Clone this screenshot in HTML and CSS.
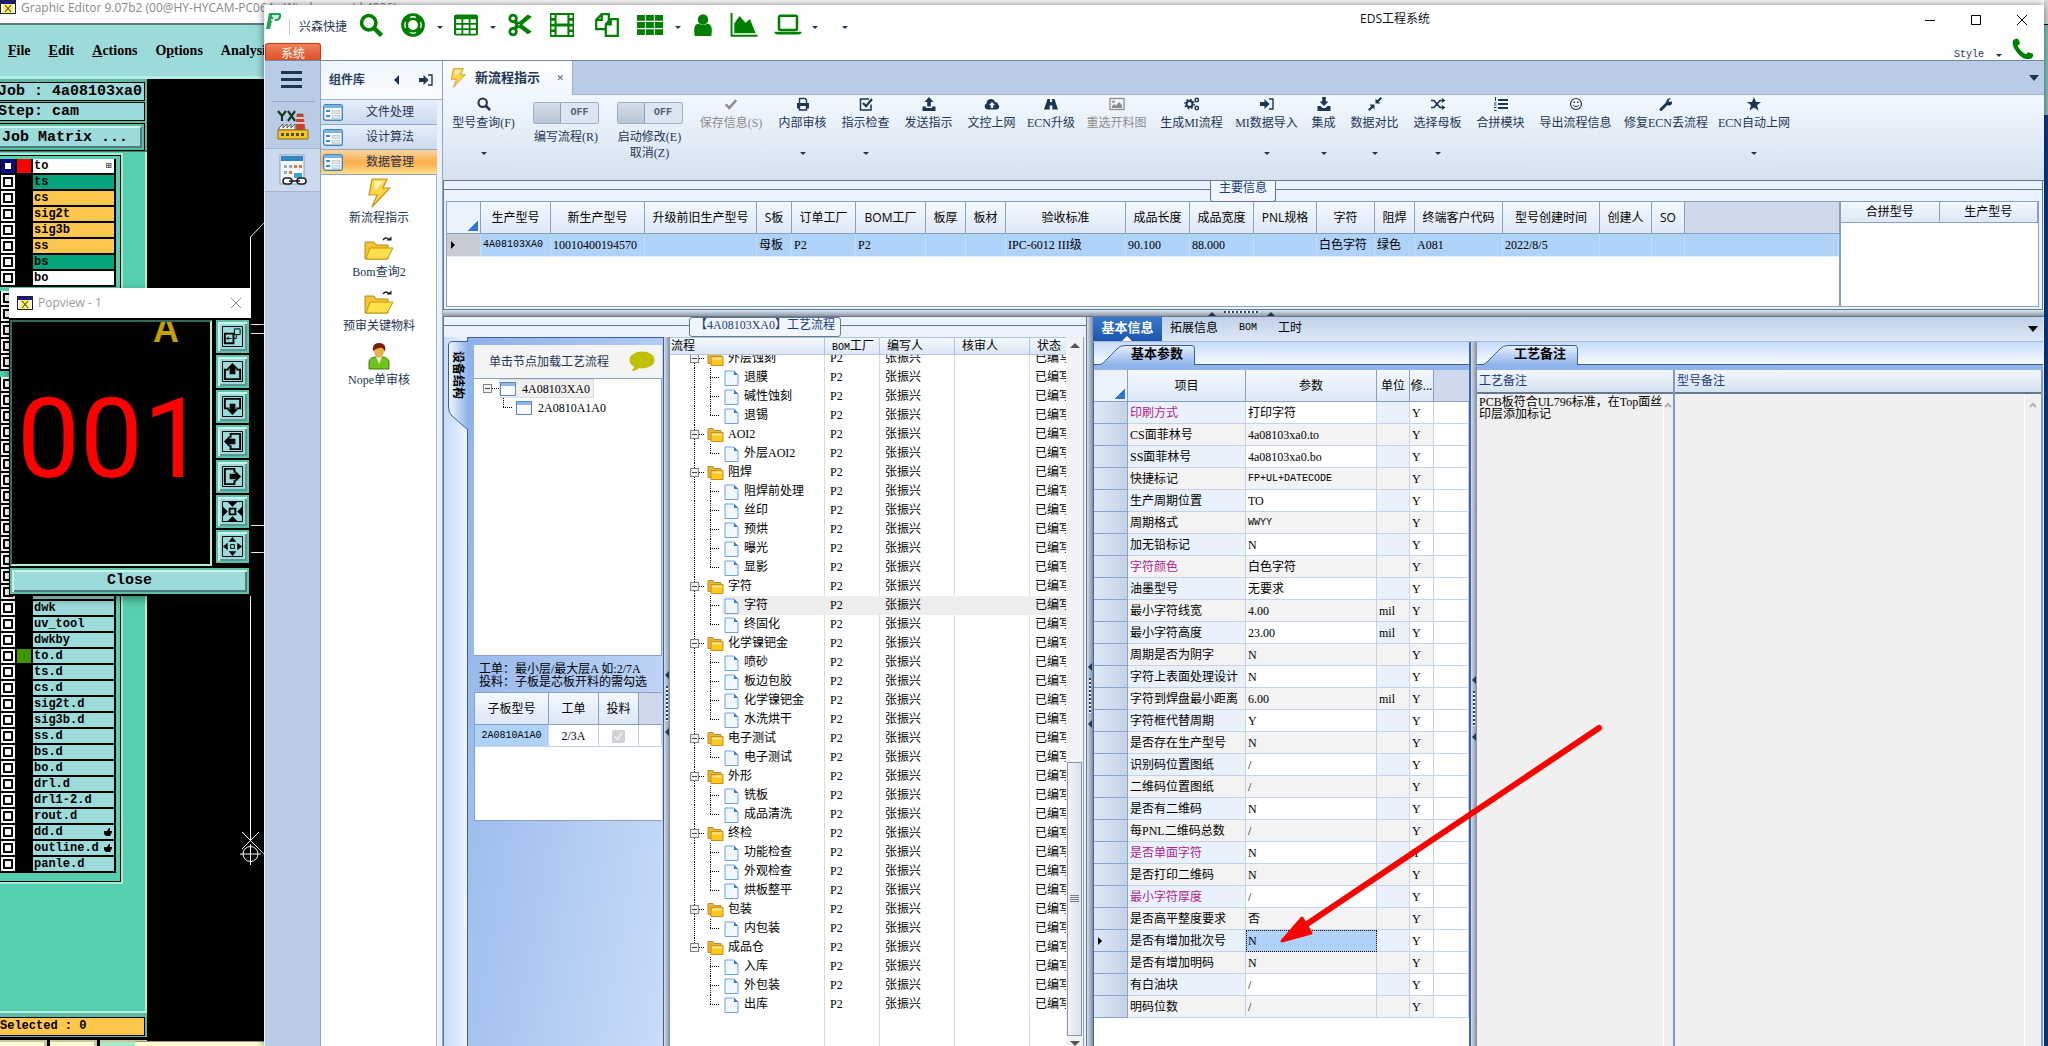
FILE: index.html
```html
<!DOCTYPE html>
<html lang="zh-CN">
<head>
<meta charset="utf-8">
<title>EDS工程系统</title>
<link rel="stylesheet" href="styles.css">
</head>
<body>
<svg class="defs" aria-hidden="true">
  <symbol id="search" viewBox="0 0 16 16"><circle cx="6.5" cy="6.5" r="4.8" fill="none" stroke="currentColor" stroke-width="2.4"/><path d="M10 10l5 5" stroke="currentColor" stroke-width="3"/></symbol>
  <symbol id="ring" viewBox="0 0 16 16"><circle cx="8" cy="8" r="5.6" fill="none" stroke="currentColor" stroke-width="4.6"/><path d="M3 6q-1 2 0 4M13 6q1 2 0 4M6 3q2-1 4 0M6 13q2 1 4 0" stroke="#fff" fill="none" stroke-width=".9"/></symbol>
  <symbol id="table" viewBox="0 0 16 16"><rect x="0" y="1" width="16" height="14" rx="1.4" fill="currentColor"/><path d="M1.4 4.2h3.6v2.4H1.4zM6.2 4.2h3.6v2.4H6.2zM11 4.2h3.6v2.4H11zM1.4 7.8h3.6v2.4H1.4zM6.2 7.8h3.6v2.4H6.2zM11 7.8h3.6v2.4H11zM1.4 11.4h3.6v2.4H1.4zM6.2 11.4h3.6v2.4H6.2zM11 11.4h3.6v2.4H11z" fill="#fff"/></symbol>
  <symbol id="cut" viewBox="0 0 16 16"><circle cx="3.4" cy="3.6" r="2.2" fill="none" stroke="currentColor" stroke-width="1.8"/><circle cx="3.4" cy="12.4" r="2.2" fill="none" stroke="currentColor" stroke-width="1.8"/><path d="M5 5l10 7.4-1.8 1.2L4.6 7zM5 11l10-8.4-1.8-1L4.6 9z" fill="currentColor" stroke="currentColor"/></symbol>
  <symbol id="film" viewBox="0 0 16 16"><path d="M0 0h16v16H0z" fill="currentColor"/><path d="M4.4 1.4h7.2v5.6H4.4zM4.4 9h7.2v5.6H4.4zM1 1.4h2v2H1zM1 5.2h2v2H1zM1 9h2v2H1zM1 12.6h2v2H1zM13 1.4h2v2h-2zM13 5.2h2v2h-2zM13 9h2v2h-2zM13 12.6h2v2h-2z" fill="#fff"/></symbol>
  <symbol id="copy" viewBox="0 0 16 16"><g fill="#fff" stroke="currentColor" stroke-width="1.5"><path d="M4.500.8h4.700v10H.8V4.500zM.8 4.500H4.500V.8"/><path d="M10.500 4h4.700v11.200H7.200V7.500zM7.200 7.500h3.300V4"/></g></symbol>
  <symbol id="cells" viewBox="0 0 18 16"><path d="M0 1h5.500v4H0zM6.200 1h5.500v4H6.200zM12.400 1H18v4h-5.600zM0 6h5.500v4H0zM6.200 6h5.500v4H6.200zM12.400 6H18v4h-5.600zM0 11h5.500v4H0zM6.200 11h5.500v4H6.200zM12.400 11H18v4h-5.600z" fill="currentColor"/></symbol>
  <symbol id="user" viewBox="0 0 16 16"><circle cx="8" cy="4" r="3.8" fill="currentColor"/><path d="M2 16q-1.600-9 3-9 3 2 6 0 4.600 0 3 9z" fill="currentColor"/></symbol>
  <symbol id="chart" viewBox="0 0 18 16"><path d="M.7 0v15.200H18" fill="none" stroke="currentColor" stroke-width="1.300"/><path d="M2.500 13.500V7L6 2l4 4.500 3-2.500 3.800 9.500z" fill="currentColor"/></symbol>
  <symbol id="laptop" viewBox="0 0 18 16"><rect x="3" y="1.800" width="12" height="9.500" rx="1" fill="none" stroke="currentColor" stroke-width="1.700"/><path d="M0 12.500h18q0 1.800-2 1.800H2q-2 0-2-1.800z" fill="currentColor"/></symbol>
  <symbol id="phone" viewBox="0 0 16 16"><path d="M1 1.500Q4-.8 5 1.500l.8 2.500-1.700 1.800Q6 9.500 10 11.800l1.800-1.500 3.400 1.200Q16 15 12 15.500 8 15.500 4 11-1 5 1 1.500z" fill="currentColor"/></symbol>
  <symbol id="tick" viewBox="0 0 16 16"><path d="M2 8.500l4 4 8-9" fill="none" stroke="currentColor" stroke-width="2.800"/></symbol>
  <symbol id="print" viewBox="0 0 16 16"><path d="M4.500 8V2.500H10L11.500 4v4" fill="none" stroke="currentColor" stroke-width="1.400"/><path d="M2 7h12v5.500h-2V10H4v2.500H2z" fill="currentColor"/><path d="M4.500 10v4h7v-4" fill="none" stroke="currentColor" stroke-width="1.400"/></symbol>
  <symbol id="check" viewBox="0 0 16 16"><path d="M13 8.500V14H2.500V3H11" fill="none" stroke="currentColor" stroke-width="1.500"/><path d="M5 7l3 3.200L14 3" fill="none" stroke="currentColor" stroke-width="2.200"/></symbol>
  <symbol id="up" viewBox="0 0 16 16"><path d="M8 1l4.500 5H9.800v4.500H6.200V6H3.500zM1.500 10.500h3.500v1.500h6v-1.500h3.500V15h-13z" fill="currentColor"/></symbol>
  <symbol id="down" viewBox="0 0 16 16"><path d="M8 10L3.500 5.500h2.700V1h3.600v4.500h2.700zM1.500 10h3l2 2h3l2-2h3v5h-13z" fill="currentColor"/></symbol>
  <symbol id="cloud" viewBox="0 0 16 16"><path fill-rule="evenodd" d="M4 13.500Q0 13 .8 9.500 1 8 2.600 7.200 3 3 7 3q3 0 4 3 3 0 3 2.500 1.500.7 1.200 2.700-.6 2.300-3.200 2.300zM8 6L4.800 9.300h2v2.700h2.400V9.300h2z" fill="currentColor"/></symbol>
  <symbol id="road" viewBox="0 0 16 16"><path d="M4.500 3H7v3h2V3h2.500L15 13.500H9.300V9.500H6.700v4H1z" fill="currentColor"/></symbol>
  <symbol id="image" viewBox="0 0 16 16"><rect x="1" y="2.500" width="14" height="11" fill="none" stroke="currentColor" stroke-width="1.300"/><circle cx="4.500" cy="5.800" r="1.300" fill="currentColor"/><path d="M3 12V10l2-2 2 1.500L10 6l3 3v3z" fill="currentColor"/></symbol>
  <symbol id="cogs" viewBox="0 0 16 16"><circle cx="5.500" cy="8" r="3" fill="none" stroke="currentColor" stroke-width="2"/><circle cx="5.500" cy="8" r="4.600" fill="none" stroke="currentColor" stroke-width="1.500" stroke-dasharray="1.800 1.800"/><circle cx="12.800" cy="4" r="1.700" fill="none" stroke="currentColor" stroke-width="1.500"/><circle cx="12.800" cy="12" r="1.700" fill="none" stroke="currentColor" stroke-width="1.500"/></symbol>
  <symbol id="enter" viewBox="0 0 16 16"><path d="M1 6h4.500V3l5 5-5 5v-3H1z" fill="currentColor"/><path d="M10 3h4v10h-4" fill="none" stroke="currentColor" stroke-width="1.400"/></symbol>
  <symbol id="compress" viewBox="0 0 16 16"><path d="M8.500 2.500v5h5l-1.700-1.700L15 2.500 13.500 1l-3.300 3.200zM7.500 13.500v-5h-5l1.700 1.700L1 13.500 2.500 15l3.300-3.200z" fill="currentColor"/></symbol>
  <symbol id="shuffle" viewBox="0 0 16 16"><path d="M1 4.500h3l6 7h3M1 11.500h3l6-7h3" fill="none" stroke="currentColor" stroke-width="1.700"/><path d="M12 2l3.500 2.500L12 7zM12 9l3.500 2.500L12 14z" fill="currentColor"/></symbol>
  <symbol id="list" viewBox="0 0 16 16"><path d="M5 3h10v2H5zM5 7h10v2H5zM5 11h10v2H5zM2 1h1v4H2zM1 6.500h2.500v1H1zM1 8.500h2.500v1H1zM1 11h2.500v1H1zM1 14h2.500v1H1z" fill="currentColor"/></symbol>
  <symbol id="smile" viewBox="0 0 16 16"><circle cx="8" cy="8" r="5.500" fill="none" stroke="currentColor" stroke-width="1.200"/><path d="M5.500 5.500h1.500v1.500H5.500zM9 5.500h1.500v1.500H9z" fill="currentColor"/><path d="M5 9q3 3.500 6 0" fill="none" stroke="currentColor"/></symbol>
  <symbol id="wrench" viewBox="0 0 16 16"><path d="M3 13.500L9.500 7" stroke="currentColor" stroke-width="3" stroke-linecap="round"/><path d="M13 2L10.500 4.500l1 1.500L14 5.500q.5 4-3 4-3 0-3-3.500Q9 2 13 2z" fill="currentColor"/></symbol>
  <symbol id="star" viewBox="0 0 16 16"><path d="M8 1l2 5h5l-4 3.300 1.500 5.200L8 11.500l-4.500 3L5 9.300 1 6h5z" fill="currentColor"/></symbol>
  <symbol id="bolt" viewBox="0 0 24 30"><path d="M5 1h15l-4 9h7L5 29l5-12H2z" fill="#ffd34a" stroke="#c8921a" stroke-width="1.200"/><path d="M7 3h10L8 13z" fill="#fff3a8"/></symbol>
  <symbol id="folder-out" viewBox="0 0 30 24"><path d="M1 6h9l2 3h12v14H1z" fill="#f3c338" stroke="#b98a10"/><path d="M6 12h23l-6 11H2z" fill="#ffe04a" stroke="#c4950f"/><path d="M19 4q3-4 6 0" fill="none" stroke="#222" stroke-width="1.300"/><path d="M22.500 4.500h5V.500z" fill="#222"/></symbol>
  <symbol id="person" viewBox="0 0 24 28"><path d="M2 27V20q1-5 7-5h6q6 0 7 5v7z" fill="#72c31f" stroke="#3f7d10"/><path d="M9 15h6l-3 7z" fill="#f7e9c8"/><ellipse cx="12" cy="9" rx="5" ry="6.500" fill="#e8b04a"/><path d="M6 9Q5 1 12 1q8 0 6 9-2-5-5-4-4 0-7 3z" fill="#7a1c08"/></symbol>
  <symbol id="form" viewBox="0 0 20 17"><rect x=".7" y=".7" width="18.600" height="15.600" rx="2" fill="#fff" stroke="#4784b8" stroke-width="1.400"/><path d="M1 1h18v3H1z" fill="#79b4de"/><path d="M3 7h4M3 12h4" stroke="#3a8ad0" stroke-width="2"/><path d="M9 6.500h8v3H9zM9 11.500h8v3H9z" fill="#dde6ee" stroke="#a8b8c8" stroke-width=".6"/></symbol>
  <symbol id="dir" viewBox="0 0 17 15"><path d="M1 1h5l1 2h7v9H1z" fill="#eab530" stroke="#b98a3a"/><path d="M4 5h12v9H4z" fill="#ffc81e" stroke="#c98f10"/><path d="M5 6h10v2H5z" fill="#ffe98a"/></symbol>
  <symbol id="doc" viewBox="0 0 15 16"><path d="M1 1h9l4 4v10.500H1z" fill="#f0f7ff" stroke="#6f9fe0"/><path d="M10 1v4h4z" fill="#3a78d8"/></symbol>
  <symbol id="win" viewBox="0 0 16 14"><rect x=".5" y=".5" width="15" height="13" fill="#fafdff" stroke="#5a86c0"/><path d="M1 1h14v3H1z" fill="#8fb8e8"/></symbol>
  <symbol id="xwin" viewBox="0 0 16 14"><rect x=".5" y=".5" width="15" height="13" fill="#fff" stroke="#222"/><path d="M1 1h14v3H1z" fill="#1a1a8a"/><path d="M3 4h10v9H3z" fill="#ffef6a"/><path d="M5 5l6 7M11 5l-6 7" stroke="#333"/></symbol>
  <symbol id="pop-link" viewBox="0 0 22 22"><path d="M.5.500h21v21H.5z" fill="none" stroke="#000"/><path d="M3 8h9v10H3z" fill="none" stroke="#000" stroke-width="2"/><path d="M13 3h6v6h-6zM5 13h5M15 9v4h-3M7 11l-2 2 2 2" fill="none" stroke="#000"/></symbol>
  <symbol id="pop-up" viewBox="0 0 22 22"><path d="M.5.500h21v21H.5z" fill="none" stroke="#000"/><path d="M7 9H3v10h16V9h-4" fill="none" stroke="#000" stroke-width="2"/><path d="M11 2l6 6h-3v6H8V8H5z"/></symbol>
  <symbol id="pop-in" viewBox="0 0 22 22"><path d="M.5.500h21v21H.5z" fill="none" stroke="#000"/><path d="M8 8h6v6H8z" fill="none" stroke="#000" stroke-width="2"/><path d="M6 1h10l-5 5zM6 21h10l-5-5zM1 6v10l5-5zM21 6v10l-5-5z"/></symbol>
  <symbol id="pop-out" viewBox="0 0 22 22"><path d="M.5.500h21v21H.5z" fill="none" stroke="#000"/><path d="M9 9h4v4H9z" fill="none" stroke="#000"/><path d="M7 6h8l-4-5zM7 16h8l-4 5zM6 7v8l-5-4zM16 7v8l5-4z"/></symbol>
  <symbol id="hand" viewBox="0 0 8 8"><path d="M0 3h3l2-3h1v3h2v1L6 8H2L0 6z"/></symbol>
</svg>

<section class="editor">
  <header class="editor-title"><svg width="16" height="14"><use href="#xwin"/></svg>Graphic Editor 9.07b2 (00@HY-HYCAM-PC064 - Windows - pid 4836)</header>
  <nav class="editor-menu"><a href="#"><u>F</u>ile</a><a href="#"><u>E</u>dit</a><a href="#"><u>A</u>ctions</a><a href="#">O<u>p</u>tions</a><a href="#">Analysis</a></nav>
  <div class="editor-body">
    <aside class="job">
      <div class="job-head">
        <p>Job : 4a08103xa0</p>
        <p>Step: cam</p>
        <div class="job-frame"><button>Job Matrix ...</button></div>
      </div>
      <div class="layers">
        <ul>
          <li><input type="checkbox" class="on" aria-label="to"><i class="red"></i><span class="white">to<b>⊞</b></span></li>
          <li><input type="checkbox" aria-label="ts"><i></i><span class="green">ts</span></li>
          <li><input type="checkbox" aria-label="cs"><i></i><span class="amber">cs</span></li>
          <li><input type="checkbox" aria-label="sig2t"><i></i><span class="amber">sig2t</span></li>
          <li><input type="checkbox" aria-label="sig3b"><i></i><span class="amber">sig3b</span></li>
          <li><input type="checkbox" aria-label="ss"><i></i><span class="amber">ss</span></li>
          <li><input type="checkbox" aria-label="bs"><i></i><span class="green">bs</span></li>
          <li><input type="checkbox" aria-label="bo"><i></i><span class="white">bo</span></li>
        </ul>
        <ul>
          <li><input type="checkbox" aria-label="layer"><i></i><span></span></li>
          <li><input type="checkbox" aria-label="layer"><i></i><span></span></li>
          <li><input type="checkbox" aria-label="layer"><i></i><span></span></li>
          <li><input type="checkbox" aria-label="layer"><i></i><span></span></li>
          <li><input type="checkbox" aria-label="layer"><i></i><span></span></li>
        </ul>
        <ul>
          <li><input type="checkbox" aria-label="layer"><i></i><span></span></li>
          <li><input type="checkbox" aria-label="layer"><i></i><span></span></li>
          <li><input type="checkbox" aria-label="layer"><i></i><span></span></li>
          <li><input type="checkbox" aria-label="layer"><i></i><span></span></li>
          <li><input type="checkbox" aria-label="layer"><i></i><span></span></li>
          <li><input type="checkbox" aria-label="layer"><i></i><span></span></li>
          <li><input type="checkbox" aria-label="layer"><i></i><span></span></li>
          <li><input type="checkbox" aria-label="layer"><i></i><span></span></li>
          <li><input type="checkbox" aria-label="layer"><i></i><span></span></li>
          <li><input type="checkbox" aria-label="layer"><i></i><span></span></li>
          <li><input type="checkbox" aria-label="layer"><i></i><span></span></li>
          <li><input type="checkbox" aria-label="layer"><i></i><span></span></li>
          <li><input type="checkbox" aria-label="layer"><i></i><span></span></li>
          <li><input type="checkbox" aria-label="dwk-cs"><i></i><span>dwk-cs</span></li>
          <li><input type="checkbox" aria-label="dwk"><i></i><span>dwk</span></li>
          <li><input type="checkbox" aria-label="uv_tool"><i></i><span>uv_tool</span></li>
          <li><input type="checkbox" aria-label="dwkby"><i></i><span>dwkby</span></li>
          <li><input type="checkbox" aria-label="to.d"><i class="lime"></i><span>to.d</span></li>
          <li><input type="checkbox" aria-label="ts.d"><i></i><span>ts.d</span></li>
          <li><input type="checkbox" aria-label="cs.d"><i></i><span>cs.d</span></li>
          <li><input type="checkbox" aria-label="sig2t.d"><i></i><span>sig2t.d</span></li>
          <li><input type="checkbox" aria-label="sig3b.d"><i></i><span>sig3b.d</span></li>
          <li><input type="checkbox" aria-label="ss.d"><i></i><span>ss.d</span></li>
          <li><input type="checkbox" aria-label="bs.d"><i></i><span>bs.d</span></li>
          <li><input type="checkbox" aria-label="bo.d"><i></i><span>bo.d</span></li>
          <li><input type="checkbox" aria-label="drl.d"><i></i><span>drl.d</span></li>
          <li><input type="checkbox" aria-label="drl1-2.d"><i></i><span>drl1-2.d</span></li>
          <li><input type="checkbox" aria-label="rout.d"><i></i><span>rout.d</span></li>
          <li><input type="checkbox" aria-label="dd.d"><i></i><span>dd.d<svg width="8" height="8"><use href="#hand"/></svg></span></li>
          <li><input type="checkbox" aria-label="outline.d"><i></i><span>outline.d<svg width="8" height="8"><use href="#hand"/></svg></span></li>
          <li><input type="checkbox" aria-label="panle.d"><i></i><span>panle.d</span></li>
        </ul>
      </div>
      <div class="selected"><p>Selected : 0</p></div>
      <div class="tools"><i></i><i></i><i class="cur"></i></div>
    </aside>
    <div class="board">
      <svg width="117" height="967" viewBox="147 79 117 967" fill="none" stroke="#fff">
        <path d="M264 223l-13.500 14V840M242 832l22 22M259 832l-17 17M240 854h21M250.500 844v21M251 324.500h13M251 333.500h13M251 525.500h13M251 552.500h13"/><circle cx="250.500" cy="854" r="7.500"/>
      </svg>
      <div class="board-foot"></div>
    </div>
  </div>
</section>
<div class="edge"></div>

<section class="popview">
  <header><svg width="16" height="14"><use href="#xwin"/></svg><h2>Popview - 1</h2><button aria-label="关闭"><svg width="12" height="12" stroke="#888"><path d="M1 1l10 10M11 1L1 11"/></svg></button></header>
  <div class="pop-main">
    <div class="pop-canvas"><span class="pop-a">A</span><div class="pop-digits"><span>0</span><span>0</span><span>1</span></div></div>
    <div class="pop-tools">
      <button aria-label="link"><svg><use href="#pop-link"/></svg></button>
      <button aria-label="up"><svg><use href="#pop-up"/></svg></button>
      <button aria-label="down"><svg class="r180"><use href="#pop-up"/></svg></button>
      <button aria-label="left"><svg class="r270"><use href="#pop-up"/></svg></button>
      <button aria-label="right"><svg class="r90"><use href="#pop-up"/></svg></button>
      <button aria-label="in"><svg><use href="#pop-in"/></svg></button>
      <button aria-label="out"><svg><use href="#pop-out"/></svg></button>
    </div>
  </div>
  <div class="pop-foot"><button>Close</button></div>
</section>

<main class="eds">
  <header class="eds-head">
    <div class="quick">
      <svg class="logo" width="16" height="18" viewBox="0 0 16 18"><path d="M3 1h10q3 0 2 4t-5 4H6L4 17H0z" fill="#1fa35a"/><path d="M6 4h6l-1 2H8L7 9M5 8h4" stroke="#fff" stroke-width="1.500" fill="none"/></svg>
      <span class="brand">兴森快捷</span>
      <button class="q1" aria-label="搜索"><svg><use href="#search"/></svg></button>
      <button class="q2" aria-label="帮助"><svg><use href="#ring"/></svg></button><i class="caret"></i>
      <button class="q3" aria-label="表格"><svg><use href="#table"/></svg></button><i class="caret"></i>
      <button class="q4" aria-label="剪切"><svg><use href="#cut"/></svg></button>
      <button class="q5" aria-label="胶片"><svg><use href="#film"/></svg></button>
      <button class="q6" aria-label="复制"><svg><use href="#copy"/></svg></button>
      <button class="q7" aria-label="宫格"><svg><use href="#cells"/></svg></button><i class="caret"></i>
      <button class="q8" aria-label="用户"><svg><use href="#user"/></svg></button>
      <button class="q9" aria-label="图表"><svg><use href="#chart"/></svg></button>
      <button class="q10" aria-label="电脑"><svg><use href="#laptop"/></svg></button><i class="caret"></i>
      <i class="caret more"></i>
    </div>
    <h1>EDS工程系统</h1>
    <div class="controls">
      <button aria-label="最小化"><svg width="12" height="12"><path d="M1 6.500h10"/></svg></button>
      <button aria-label="最大化"><svg width="12" height="12"><path d="M1.500 1.500h9v9h-9z"/></svg></button>
      <button aria-label="关闭"><svg width="12" height="12"><path d="M1 1l10 10M11 1L1 11"/></svg></button>
    </div>
    <a class="sys" href="#">系统</a>
    <div class="style-menu"><button>Style <i class="caret"></i></button><svg width="22" height="22"><use href="#phone"/></svg></div>
  </header>

  <div class="eds-body">
    <nav class="rail">
      <button class="burger" aria-label="菜单"><i></i><i></i><i></i></button>
      <button class="rail-item" aria-label="YX"><svg width="32" height="30" viewBox="0 0 32 30"><path d="M2 18l4-4v4l4-4v4l4-4v4l4-4v6H2z" fill="#f4f0e4" stroke="#444" stroke-width=".8"/><path d="M20 4h6l2 16h-9z" fill="#d83a2a" stroke="#555" stroke-width=".6"/><path d="M19 8h8M19 13h9" stroke="#eee" stroke-width="1.500"/><path d="M1 20h30v9H1z" fill="#f3c72a" stroke="#8a6a10"/><path d="M4 23h3v3H4zM9 23h3v3H9zM14 23h3v3h-3zM19 23h3v3h-3zM24 23h3v3h-3z" fill="#5a4a10"/><path d="M1 1l4 5v5M9 1L5 6M11 1l7 10M18 1l-7 10" fill="none" stroke="#1c3a24" stroke-width="2.200"/></svg></button>
      <button class="rail-item cur" aria-label="日程"><svg width="30" height="32" viewBox="0 0 30 32"><rect x="2" y="1" width="24" height="29" fill="#f6f9fc" stroke="#8aa0b8"/><path d="M3 2h22v5H3z" fill="#2f86c4"/><path d="M6 11h3v3H6zM11 11h3v3h-3zM6 17h3v3H6z" fill="#9ab"/><path d="M16 11h3v3h-3zM11 17h3v3h-3zM21 11h3v3h-3z" fill="#f2703a"/><path d="M16 19h8v5h-8z" fill="#3aa6d8"/><g fill="#fff" stroke="#222" stroke-width="1.600"><rect x="5" y="24" width="9" height="6" rx="3"/><rect x="19" y="24" width="9" height="6" rx="3"/><path d="M11 27h11"/></g></svg></button>
    </nav>
    <aside class="library">
      <header><h2>组件库</h2><i class="tri-left"></i><svg width="16" height="16"><use href="#enter"/></svg></header>
      <button class="group"><svg width="20" height="17"><use href="#form"/></svg><span>文件处理</span></button>
      <button class="group"><svg width="20" height="17"><use href="#form"/></svg><span>设计算法</span></button>
      <button class="group cur"><svg width="20" height="17"><use href="#form"/></svg><span>数据管理</span></button>
      <a class="tile" href="#"><svg width="24" height="30"><use href="#bolt"/></svg>新流程指示</a>
      <a class="tile" href="#"><svg class="folder" width="30" height="24"><use href="#folder-out"/></svg>Bom查询2</a>
      <a class="tile" href="#"><svg class="folder" width="30" height="24"><use href="#folder-out"/></svg>预审关键物料</a>
      <a class="tile" href="#"><svg width="24" height="28"><use href="#person"/></svg>Nope单审核</a>
    </aside>

    <div class="work">
      <div class="tabs"><div class="tab"><svg width="16" height="20"><use href="#bolt"/></svg><b>新流程指示</b><button aria-label="关闭标签">✕</button></div><i class="caret big"></i></div>
      <div class="toolbar">
        <button class="tool small"><svg><use href="#search"/></svg>型号查询(F)<i class="caret"></i></button>
        <label class="tool sw"><input type="checkbox" role="switch"><span class="switch"><b>OFF</b></span>编写流程(R)</label>
        <div class="tool sw"><label><input type="checkbox" role="switch"><span class="switch"><b>OFF</b></span>启动修改(E)</label><button>取消(Z)</button></div>
        <button class="tool small" disabled><svg><use href="#tick"/></svg>保存信息(S)</button>
        <button class="tool"><svg><use href="#print"/></svg>内部审核<i class="caret"></i></button>
        <button class="tool"><svg><use href="#check"/></svg>指示检查<i class="caret"></i></button>
        <button class="tool"><svg><use href="#up"/></svg>发送指示</button>
        <button class="tool"><svg><use href="#cloud"/></svg>文控上网</button>
        <button class="tool"><svg><use href="#road"/></svg>ECN升级</button>
        <button class="tool" disabled><svg><use href="#image"/></svg>重选开料图</button>
        <button class="tool"><svg><use href="#cogs"/></svg>生成MI流程</button>
        <button class="tool"><svg><use href="#enter"/></svg>MI数据导入<i class="caret"></i></button>
        <button class="tool"><svg><use href="#down"/></svg>集成<i class="caret"></i></button>
        <button class="tool"><svg><use href="#compress"/></svg>数据对比<i class="caret"></i></button>
        <button class="tool"><svg><use href="#shuffle"/></svg>选择母板<i class="caret"></i></button>
        <button class="tool"><svg><use href="#list"/></svg>合拼模块</button>
        <button class="tool"><svg><use href="#smile"/></svg>导出流程信息</button>
        <button class="tool"><svg><use href="#wrench"/></svg>修复ECN丢流程</button>
        <button class="tool"><svg><use href="#star"/></svg>ECN自动上网<i class="caret"></i></button>
      </div>

      <section class="main-info">
        <div class="legend"><h3>主要信息</h3></div>
        <div class="info-grids">
          <div class="info-left">
            <table class="grid info">
              <colgroup><col class="w34"><col class="w70"><col class="w94"><col class="w112"><col class="w35"><col class="w64"><col class="w70"><col class="w40"><col class="w40"><col class="w120"><col class="w64"><col class="w64"><col class="w63"><col class="w58"><col class="w40"><col class="w88"><col class="w97"><col class="w52"><col class="w33"><col></colgroup>
              <thead><tr><th class="corner"></th><th>生产型号</th><th>新生产型号</th><th>升级前旧生产型号</th><th>S板</th><th>订单工厂</th><th>BOM工厂</th><th>板厚</th><th>板材</th><th>验收标准</th><th>成品长度</th><th>成品宽度</th><th>PNL规格</th><th>字符</th><th>阻焊</th><th>终端客户代码</th><th>型号创建时间</th><th>创建人</th><th>SO</th><th class="fill"></th></tr></thead>
              <tbody><tr><td class="mark"><i></i></td><td class="m">4A08103XA0</td><td>10010400194570</td><td></td><td>母板</td><td>P2</td><td>P2</td><td></td><td></td><td>IPC-6012 III级</td><td>90.100</td><td>88.000</td><td></td><td>白色字符</td><td>绿色</td><td>A081</td><td>2022/8/5</td><td></td><td></td><td></td></tr></tbody>
            </table>
          </div>
          <div class="info-right">
            <table class="grid"><thead><tr><th>合拼型号</th><th>生产型号</th></tr></thead></table>
          </div>
        </div>
      </section>
      <div class="hsplit"><i class="tri-up"></i><i class="dots"></i><i class="tri-up"></i></div>

      <div class="lower">
        <section class="process">
          <div class="legend"><h3>【4A08103XA0】工艺流程</h3></div>
          <div class="process-body">
            <div class="side"><button><svg width="20" height="90" viewBox="0 0 20 90"><defs><linearGradient id="sg"><stop offset="0" stop-color="#f4f8ff"/><stop offset="1" stop-color="#8fb3ea"/></linearGradient></defs><path d="M20 .5H4Q.5.500.500 4V66Q.5 72 4 75L20 89" fill="url(#sg)" stroke="#3c5f9a"/></svg><b>设备结构</b></button></div>
            <div class="device">
              <div class="device-head"><span>单击节点加载工艺流程</span><svg width="26" height="22" viewBox="0 0 26 22"><ellipse cx="13" cy="9" rx="12.500" ry="8.500" fill="#bfc000"/><path d="M5 14q0 4-3 6 6 0 9-4z" fill="#bfc000"/></svg></div>
              <ul class="device-tree">
                <li><i class="box"></i><i class="dash"></i><span class="node cur"><svg width="16" height="14"><use href="#win"/></svg>4A08103XA0</span></li>
                <li class="child"><span class="node"><svg width="16" height="14"><use href="#win"/></svg>2A0810A1A0</span></li>
              </ul>
              <p class="hint">工单：最小层/最大层A 如:2/7A<br>投料：子板是芯板开料的需勾选</p>
              <div class="sub">
                <table class="grid"><colgroup><col class="w74"><col class="w50"><col class="w40"><col></colgroup>
                  <thead><tr><th>子板型号</th><th>工单</th><th>投料</th><th class="fill"></th></tr></thead>
                  <tbody><tr><td class="m hot">2A0810A1A0</td><td>2/3A</td><td><input type="checkbox" checked disabled aria-label="投料"></td><td></td></tr></tbody>
                </table>
              </div>
            </div>
            <div class="vsplit"><i class="tri-l"></i><i class="vdots"></i><i class="tri-l"></i></div>
            <div class="flow">
              <div class="flow-main">
                <table class="flow-head"><colgroup><col><col class="w55"><col class="w75"><col class="w75"><col class="w37"></colgroup><thead><tr><th>流程</th><th><span class="m">BOM</span>工厂</th><th>编写人</th><th>核审人</th><th>状态</th></tr></thead></table>
                <div class="flow-rows">
                <table><colgroup><col><col class="w55"><col class="w75"><col class="w75"><col class="w37"></colgroup>
                <tbody>
                <tr class="dir"><td><svg><use href="#dir"/></svg>外层蚀刻</td><td>P2</td><td>张振兴</td><td></td><td>已编写</td></tr>
                <tr class="doc"><td><svg><use href="#doc"/></svg>退膜</td><td>P2</td><td>张振兴</td><td></td><td>已编写</td></tr>
                <tr class="doc"><td><svg><use href="#doc"/></svg>碱性蚀刻</td><td>P2</td><td>张振兴</td><td></td><td>已编写</td></tr>
                <tr class="doc end"><td><svg><use href="#doc"/></svg>退锡</td><td>P2</td><td>张振兴</td><td></td><td>已编写</td></tr>
                <tr class="dir"><td><svg><use href="#dir"/></svg>AOI2</td><td>P2</td><td>张振兴</td><td></td><td>已编写</td></tr>
                <tr class="doc end"><td><svg><use href="#doc"/></svg>外层AOI2</td><td>P2</td><td>张振兴</td><td></td><td>已编写</td></tr>
                <tr class="dir"><td><svg><use href="#dir"/></svg>阻焊</td><td>P2</td><td>张振兴</td><td></td><td>已编写</td></tr>
                <tr class="doc"><td><svg><use href="#doc"/></svg>阻焊前处理</td><td>P2</td><td>张振兴</td><td></td><td>已编写</td></tr>
                <tr class="doc"><td><svg><use href="#doc"/></svg>丝印</td><td>P2</td><td>张振兴</td><td></td><td>已编写</td></tr>
                <tr class="doc"><td><svg><use href="#doc"/></svg>预烘</td><td>P2</td><td>张振兴</td><td></td><td>已编写</td></tr>
                <tr class="doc"><td><svg><use href="#doc"/></svg>曝光</td><td>P2</td><td>张振兴</td><td></td><td>已编写</td></tr>
                <tr class="doc end"><td><svg><use href="#doc"/></svg>显影</td><td>P2</td><td>张振兴</td><td></td><td>已编写</td></tr>
                <tr class="dir"><td><svg><use href="#dir"/></svg>字符</td><td>P2</td><td>张振兴</td><td></td><td>已编写</td></tr>
                <tr class="doc cur"><td><svg><use href="#doc"/></svg>字符</td><td>P2</td><td>张振兴</td><td></td><td>已编写</td></tr>
                <tr class="doc end"><td><svg><use href="#doc"/></svg>终固化</td><td>P2</td><td>张振兴</td><td></td><td>已编写</td></tr>
                <tr class="dir"><td><svg><use href="#dir"/></svg>化学镍钯金</td><td>P2</td><td>张振兴</td><td></td><td>已编写</td></tr>
                <tr class="doc"><td><svg><use href="#doc"/></svg>喷砂</td><td>P2</td><td>张振兴</td><td></td><td>已编写</td></tr>
                <tr class="doc"><td><svg><use href="#doc"/></svg>板边包胶</td><td>P2</td><td>张振兴</td><td></td><td>已编写</td></tr>
                <tr class="doc"><td><svg><use href="#doc"/></svg>化学镍钯金</td><td>P2</td><td>张振兴</td><td></td><td>已编写</td></tr>
                <tr class="doc end"><td><svg><use href="#doc"/></svg>水洗烘干</td><td>P2</td><td>张振兴</td><td></td><td>已编写</td></tr>
                <tr class="dir"><td><svg><use href="#dir"/></svg>电子测试</td><td>P2</td><td>张振兴</td><td></td><td>已编写</td></tr>
                <tr class="doc end"><td><svg><use href="#doc"/></svg>电子测试</td><td>P2</td><td>张振兴</td><td></td><td>已编写</td></tr>
                <tr class="dir"><td><svg><use href="#dir"/></svg>外形</td><td>P2</td><td>张振兴</td><td></td><td>已编写</td></tr>
                <tr class="doc"><td><svg><use href="#doc"/></svg>铣板</td><td>P2</td><td>张振兴</td><td></td><td>已编写</td></tr>
                <tr class="doc end"><td><svg><use href="#doc"/></svg>成品清洗</td><td>P2</td><td>张振兴</td><td></td><td>已编写</td></tr>
                <tr class="dir"><td><svg><use href="#dir"/></svg>终检</td><td>P2</td><td>张振兴</td><td></td><td>已编写</td></tr>
                <tr class="doc"><td><svg><use href="#doc"/></svg>功能检查</td><td>P2</td><td>张振兴</td><td></td><td>已编写</td></tr>
                <tr class="doc"><td><svg><use href="#doc"/></svg>外观检查</td><td>P2</td><td>张振兴</td><td></td><td>已编写</td></tr>
                <tr class="doc end"><td><svg><use href="#doc"/></svg>烘板整平</td><td>P2</td><td>张振兴</td><td></td><td>已编写</td></tr>
                <tr class="dir"><td><svg><use href="#dir"/></svg>包装</td><td>P2</td><td>张振兴</td><td></td><td>已编写</td></tr>
                <tr class="doc end"><td><svg><use href="#doc"/></svg>内包装</td><td>P2</td><td>张振兴</td><td></td><td>已编写</td></tr>
                <tr class="dir final"><td><svg><use href="#dir"/></svg>成品仓</td><td>P2</td><td>张振兴</td><td></td><td>已编写</td></tr>
                <tr class="doc tail"><td><svg><use href="#doc"/></svg>入库</td><td>P2</td><td>张振兴</td><td></td><td>已编写</td></tr>
                <tr class="doc tail"><td><svg><use href="#doc"/></svg>外包装</td><td>P2</td><td>张振兴</td><td></td><td>已编写</td></tr>
                <tr class="doc tail end"><td><svg><use href="#doc"/></svg>出库</td><td>P2</td><td>张振兴</td><td></td><td>已编写</td></tr>
                <tr class="rest"><td></td><td></td><td></td><td></td><td></td></tr>
                </tbody></table>
                </div>
              </div>
              <div class="scroll"><i class="arrow-up"></i><i class="thumb"><b></b></i><i class="arrow-down"></i></div>
            </div>
          </div>
        </section>
        <div class="vsplit wide"><i class="tri-l"></i><i class="vdots"></i><i class="tri-l"></i></div>

        <section class="detail">
          <nav class="detail-tabs"><a class="cur" href="#">基本信息</a><a href="#">拓展信息</a><a href="#" class="m">BOM</a><a href="#">工时</a><i class="caret big black"></i></nav>
          <div class="detail-body">
            <div class="params">
              <div class="subtabs"><div class="slant"><svg width="96" height="20" viewBox="0 0 96 20" fill="none"><defs><linearGradient id="tg" x2="0" y2="1"><stop offset="0" stop-color="#e8f1ff"/><stop offset="1" stop-color="#8fb3ea"/></linearGradient></defs><path d="M0 20Q4 19 7 15L18 4Q21 .5 26 .500H93Q95.500.500 95.500 4V20" fill="url(#tg)" stroke="#3c5f9a"/></svg><b>基本参数</b></div></div>
              <div class="params-grid">
              <table class="grid">
                <colgroup><col class="w34"><col class="w118"><col class="w131"><col class="w33"><col class="w24"><col></colgroup>
                <thead><tr><th class="corner"></th><th>项目</th><th>参数</th><th>单位</th><th>修...</th><th class="fill"></th></tr></thead>
                <tbody>
                <tr><td></td><td class="key">印刷方式</td><td>打印字符</td><td></td><td>Y</td><td></td></tr>
                <tr><td></td><td>CS面菲林号</td><td>4a08103xa0.to</td><td></td><td>Y</td><td></td></tr>
                <tr><td></td><td>SS面菲林号</td><td>4a08103xa0.bo</td><td></td><td>Y</td><td></td></tr>
                <tr><td></td><td>快捷标记</td><td class="m">FP+UL+DATECODE</td><td></td><td>Y</td><td></td></tr>
                <tr><td></td><td>生产周期位置</td><td>TO</td><td></td><td>Y</td><td></td></tr>
                <tr><td></td><td>周期格式</td><td class="m">WWYY</td><td></td><td>Y</td><td></td></tr>
                <tr><td></td><td>加无铅标记</td><td>N</td><td></td><td>Y</td><td></td></tr>
                <tr><td></td><td class="key">字符颜色</td><td>白色字符</td><td></td><td>Y</td><td></td></tr>
                <tr><td></td><td>油墨型号</td><td>无要求</td><td></td><td>Y</td><td></td></tr>
                <tr><td></td><td>最小字符线宽</td><td>4.00</td><td>mil</td><td>Y</td><td></td></tr>
                <tr><td></td><td>最小字符高度</td><td>23.00</td><td>mil</td><td>Y</td><td></td></tr>
                <tr><td></td><td>周期是否为阴字</td><td>N</td><td></td><td>Y</td><td></td></tr>
                <tr><td></td><td>字符上表面处理设计</td><td>N</td><td></td><td>Y</td><td></td></tr>
                <tr><td></td><td>字符到焊盘最小距离</td><td>6.00</td><td>mil</td><td>Y</td><td></td></tr>
                <tr><td></td><td>字符框代替周期</td><td>Y</td><td></td><td>Y</td><td></td></tr>
                <tr><td></td><td>是否存在生产型号</td><td>N</td><td></td><td>Y</td><td></td></tr>
                <tr><td></td><td>识别码位置图纸</td><td>/</td><td></td><td>Y</td><td></td></tr>
                <tr><td></td><td>二维码位置图纸</td><td>/</td><td></td><td>Y</td><td></td></tr>
                <tr><td></td><td>是否有二维码</td><td>N</td><td></td><td>Y</td><td></td></tr>
                <tr><td></td><td>每PNL二维码总数</td><td>/</td><td></td><td>Y</td><td></td></tr>
                <tr><td></td><td class="key">是否单面字符</td><td>N</td><td></td><td>Y</td><td></td></tr>
                <tr><td></td><td>是否打印二维码</td><td>N</td><td></td><td>Y</td><td></td></tr>
                <tr><td></td><td class="key">最小字符厚度</td><td>/</td><td></td><td>Y</td><td></td></tr>
                <tr><td></td><td>是否高平整度要求</td><td>否</td><td></td><td>Y</td><td></td></tr>
                <tr><td class="mark"><i></i></td><td>是否有增加批次号</td><td class="picked">N</td><td></td><td>Y</td><td></td></tr>
                <tr><td></td><td>是否有增加明码</td><td>N</td><td></td><td>Y</td><td></td></tr>
                <tr><td></td><td>有白油块</td><td>/</td><td></td><td>Y</td><td></td></tr>
                <tr><td></td><td>明码位数</td><td>/</td><td></td><td>Y</td><td></td></tr>
                </tbody>
              </table>
              </div>
            </div>
            <div class="vsplit"><i class="tri-l"></i><i class="vdots"></i><i class="tri-l"></i></div>
            <div class="notes">
              <div class="subtabs"><div class="slant"><svg width="96" height="20" viewBox="0 0 96 20" fill="none"><path d="M0 20Q4 19 7 15L18 4Q21 .5 26 .500H93Q95.500.500 95.500 4V20" fill="url(#tg)" stroke="#3c5f9a"/></svg><b>工艺备注</b></div></div>
              <div class="notes-body">
                <div class="note n1"><label for="n1">工艺备注</label><div class="note-row"><textarea id="n1" readonly>PCB板符合UL796标准，在Top面丝印层添加标记</textarea><i class="bar"><svg width="8" height="6"><path d="M1 5l3-3 3 3" fill="none" stroke="#b0b0b0" stroke-width="2"/></svg></i></div></div>
                <div class="note n2"><label for="n2">型号备注</label><div class="note-row"><textarea id="n2" readonly></textarea><i class="bar"><svg width="8" height="6"><path d="M1 5l3-3 3 3" fill="none" stroke="#b0b0b0" stroke-width="2"/></svg></i></div></div>
              </div>
            </div>
          </div>
        </section>
      </div>
    </div>
  </div>
</main>

<svg class="pointer" width="324" height="222" viewBox="0 0 324 222" aria-hidden="true"><path d="M319 4L24 202" stroke="#f80400" stroke-width="6" stroke-linecap="round"/><path d="M2 217L22 194 31 209z" fill="#f80400" stroke="#f80400" stroke-width="3" stroke-linejoin="round"/></svg>
</body>
</html>
```
FILE: styles.css
```css
:root {
  --song: "Liberation Serif", "Noto Sans CJK SC", serif;
  --ui: "Open Sans", "Noto Sans CJK SC", sans-serif;
  --mono: "Liberation Mono", "Noto Sans CJK SC", monospace;
  --ink: #1e3553;
  --line: #8aa0bf;
  --aqua: #9cdbda;
  --teal: #54cfaf;
}
* { box-sizing: border-box; }
html, body { height: 100%; }
body { margin: 0; overflow: hidden; background: #0b3a8c; font: 12px/16px var(--song); color: #000; }
button, input, textarea { font: inherit; color: inherit; margin: 0; padding: 0; border: 0; background: none; }
p, ul { margin: 0; padding: 0; list-style: none; }
h1, h2, h3 { margin: 0; font-weight: normal; font-size: 12px; }
a { color: inherit; text-decoration: none; }
svg { flex: none; display: block; }
table { border-collapse: separate; border-spacing: 0; table-layout: fixed; width: 100%; }
th { font-weight: normal; }
th, td { padding: 0; white-space: nowrap; overflow: hidden; }
.defs { position: absolute; width: 0; height: 0; }
.m { font-family: var(--mono); font-size: 10px; }

.w24 { width: 24px; } .w33 { width: 33px; } .w34 { width: 34px; } .w35 { width: 35px; } .w37 { width: 37px; }
.w40 { width: 40px; } .w50 { width: 50px; } .w52 { width: 52px; } .w55 { width: 55px; } .w58 { width: 58px; }
.w63 { width: 63px; } .w64 { width: 64px; } .w70 { width: 70px; } .w74 { width: 74px; } .w75 { width: 75px; }
.w88 { width: 88px; } .w94 { width: 94px; } .w97 { width: 97px; } .w112 { width: 112px; } .w118 { width: 118px; }
.w120 { width: 120px; } .w131 { width: 131px; }

/* ---- Graphic editor window (behind) ---- */
.editor { position: absolute; inset: 0; display: flex; flex-direction: column; background: #000; }
.editor-title { flex: none; height: 23px; display: flex; align-items: flex-start; gap: 5px; background: #fff; color: #888; font: 12px/16px var(--ui); white-space: nowrap; }
.editor-menu { flex: none; height: 56px; display: flex; gap: 18px; align-items: center; padding-left: 8px; background: var(--aqua); border-top: 2px solid #5a8080; border-bottom: 3px solid #b5ece6; font: bold 14px/18px var(--song); }
.editor-body { flex: 1; min-height: 0; display: flex; }
.job { width: 147px; display: flex; flex-direction: column; background: var(--teal); font: bold 15px/17px var(--mono); border-right: 2px solid #b0f0dc; }
.job-head { flex: none; height: 73px; margin-right: -2px; padding: 3px 2px 0 0; background: #5fb9a0; display: flex; flex-direction: column; gap: 1px; border-bottom: 2px solid #3d7766; }
.job-head p { height: 19px; white-space: nowrap; text-indent: -2px; background: var(--aqua); border: 1px solid #000; border-left: 0; }
.job-frame { height: 28px; margin-top: 1px; padding: 2px 2px 2px 0; border: 1px solid #000; border-left: 0; }
.job-frame button { width: 100%; height: 22px; text-align: left; padding-left: 2px; background: var(--aqua); border: 2px solid; border-color: #c8f5f0 #4a8080 #4a8080 var(--aqua); border-left: 0; }
.layers { flex: none; width: 121px; margin-top: 3px; padding: 3px 2px 8px 0; border: 1px solid #000; border-left: 0; outline: 2px solid #a4ecd6; display: flex; flex-direction: column; gap: 4px; font-size: 12px; line-height: 14px; }
.layers ul { width: 116px; background: #000; }
.layers ul:last-child { margin-top: 2px; }
.layers li { height: 16px; display: flex; gap: 2px; padding: 0 2px 2px 1px; align-items: stretch; }
.layers input { appearance: none; flex: none; width: 14px; height: 14px; background: #fff; border: 2px solid #fff; outline: 2px solid #000; outline-offset: -4px; }
.layers input.on { border-color: #0a0a8c; outline-color: #0a0a6c; }
.layers i { flex: none; width: 14px; }
.layers i.red { background: #f00; }
.layers i.lime { background: #3d9400; }
.layers span { flex: 1; padding: 0 2px 0 1px; background: var(--aqua); display: flex; align-items: center; justify-content: space-between; }
.layers .white { background: #fff; }
.layers .green { background: #04a57c; }
.layers .amber { background: #fec64d; }
.layers b { font: 8px/8px "DejaVu Sans", sans-serif; }
.selected { flex: none; margin: auto -2px 0 0; padding: 4px 2px 2px 0; background: #5fb9a0; border-top: 2px solid #b0f0dc; height: 26px; }
.selected p { height: 19px; background: #fec64d; border: 1px solid #000; border-left: 0; font-size: 12px; line-height: 16px; }
.tools { flex: none; margin-right: -2px; height: 9px; border-top: 3px solid #000; display: flex; gap: 3px; background: #000; }
.tools i { flex: 1; background: #fdfbd0; box-shadow: inset -3px 2px #c8c8a0; }
.tools .cur { background: #a6e8c8; }
.board { flex: 1; position: relative; display: flex; flex-direction: column; }
.board-foot { position: absolute; left: -12px; right: 0; bottom: 0; height: 5px; background: #fdfbd0; border-top: 1px solid #99977c; }
.edge { position: absolute; right: 0; top: 0; bottom: 0; width: 4px; background: linear-gradient(#ddd 24px, #000 24px 25px, #86c4be 25px 115px, #0b3a8c 115px); }

/* ---- Popview ---- */
.popview { position: absolute; left: 9px; top: 288px; width: 242px; background: #000; box-shadow: 0 3px 8px rgba(0,0,0,.4); }
.popview header { height: 30px; padding: 0 9px 0 8px; display: flex; align-items: center; gap: 5px; background: #fff; color: #999; }
.popview h2 { flex: 1; font: 12px/16px var(--ui); }
.pop-main { display: flex; gap: 4px; padding: 2px 2px 2px 1px; }
.pop-canvas { flex: 1; height: 246px; overflow: hidden; border: 2px solid; border-color: #33685c #b4ead8 #b4ead8 #33685c; position: relative; color: #f00; font: 112px/120px "Roboto", sans-serif; }
.pop-a { position: absolute; left: 141px; top: -12px; color: #c4a000; font: bold 36px/40px "Liberation Sans", sans-serif; }
.pop-digits { display: flex; padding: 57px 0 0 5px; }
.pop-tools { width: 33px; display: flex; flex-direction: column; gap: 2px; }
.pop-tools button { height: 33px; display: grid; place-items: center; background: var(--aqua); border: 2px solid #5fc0a8; box-shadow: inset 2px 2px #c8f5f0, inset -2px -2px #5a9898; }
.pop-tools svg { width: 21px; height: 21px; }
.r90 { transform: rotate(90deg); } .r180 { transform: rotate(180deg); } .r270 { transform: rotate(270deg); }
.pop-foot { padding: 0 2px 2px 1px; }
.pop-foot button { width: 100%; height: 26px; background: var(--aqua); border: 2px solid #5fc0a8; box-shadow: inset 2px 2px #c8f5f0, inset -2px -2px #4a8080; font: bold 15px/18px var(--mono); }

/* ---- EDS window ---- */
.eds { position: absolute; left: 264px; right: 4px; top: 5px; bottom: 0; display: flex; flex-direction: column; background: #fff; box-shadow: 0 0 8px rgba(0,0,0,.55); color: var(--ink); border-left: 1px solid #e6eefa; }
.caret { flex: none; display: block; width: 0; height: 0; border: 3px solid transparent; border-top-color: var(--ink); border-bottom: 0; }
.caret.big { border-width: 6px 5px 0; }
.caret.black { border-top-color: #000; }
.eds-head { flex: none; height: 56px; display: grid; grid-template-columns: auto 1fr auto; grid-template-rows: 38px 17px; border-bottom: 1px solid #7089ab; }
.quick { display: flex; align-items: center; padding: 2px 0 0 1px; color: #008000; }
.quick button { width: 24px; height: 24px; flex: none; }
.quick button svg { width: 100%; height: 100%; }
.quick .caret { margin: 5px 0 0 12px; }
.logo { align-self: flex-start; margin-top: 5px; }
.brand { margin: 4px 12px 0 7px; padding-left: 9px; font-family: var(--ui); color: var(--ink); border-left: 1px solid #b8c8dc; white-space: nowrap; }
.quick .q2 { margin-left: 18px; }
.quick .q3 { margin-left: 11px; }
.quick .q4 { margin-left: 12px; }
.quick .q5 { margin-left: 18px; }
.quick .q6 { margin-left: 20px; width: 26px; }
.quick .q7 { margin-left: 17px; width: 26px; }
.quick .q8 { margin-left: 11px; width: 22px; }
.quick .q9 { margin-left: 16px; width: 28px; }
.quick .q10 { margin-left: 16px; width: 28px; }
.quick .q10 + .caret { margin-left: 10px; }
.quick .more { margin-left: 24px; box-shadow: 0 -4px 0 -2px #556; }
.eds-head h1 { font: 12px/28px var(--ui); color: #111; text-align: center; padding-left: 18px; }
.controls { display: flex; justify-content: flex-end; gap: 34px; padding: 9px 16px 0 0; align-items: flex-start; }
.controls button { width: 12px; height: 12px; }
.controls svg { fill: none; stroke: #000; }
.sys { width: 56px; height: 17px; overflow: hidden; padding-top: 3px; text-align: center; line-height: 14px; color: #fff; background: linear-gradient(#f08058, #dd4f28); border: 1px solid #c43a18; border-bottom: 0; border-radius: 3px 3px 0 0; }
.style-menu { grid-column: 3; display: flex; justify-content: flex-end; align-items: flex-start; gap: 10px; padding-right: 10px; color: #008000; }
.style-menu svg { margin-top: -5px; }
.style-menu button { display: flex; align-items: center; gap: 12px; margin-top: 5px; font: 10px/14px var(--mono); color: var(--ink); }
.eds-body { flex: 1; min-height: 0; display: flex; }

.rail { flex: none; width: 56px; background: #bacce5; border-right: 1px solid #8fa5c5; }
.burger { display: flex; flex-direction: column; gap: 4px; width: 43px; height: 41px; margin: 0 7px; padding: 10px 10px 0 9px; border-bottom: 1px solid #8fa5c5; }
.burger i { height: 3px; background: #1e3553; width: 21px; }
.rail-item { display: grid; place-items: center; width: 55px; height: 46px; }
.rail-item.cur { height: 44px; background: #ccdaf0; border: solid #a3b6d3; border-width: 1px 0; }
.library { flex: none; width: 122px; background: #fff; border-right: 1px solid #8fa5c5; box-shadow: inset -5px 0 #e9f1fb, inset -6px 0 #9fb2cc; }
.library header { height: 39px; display: flex; align-items: center; padding: 0 8px; background: linear-gradient(#eef5fd, #fbfdff); border-bottom: 1px solid #9fb2cc; }
.library h2 { flex: 1; text-shadow: 0 0 1px var(--ink); }
.tri-left { border: 5px solid transparent; border-right-color: var(--ink); border-left: 0; margin-right: 19px; }
.group { display: flex; align-items: center; width: 116px; height: 25px; padding-left: 2px; background: linear-gradient(#e6effb, #cbdaee); border-bottom: 1px solid #8fa5c5; }
.group span { flex: 1; text-align: center; }
.group.cur { background: linear-gradient(#fbd6a0, #fbb255 45%, #fcb04e 55%, #ffe08e); }
.tile { display: flex; flex-direction: column; align-items: center; justify-content: flex-end; gap: 2px; width: 116px; height: 54px; }
.tile:nth-of-type(1) { height: 51px; }
.folder { margin-bottom: 2px; }

.work { flex: 1; min-width: 0; display: flex; flex-direction: column; background: #eaf3fd; }
.tabs { flex: none; height: 34px; display: flex; justify-content: space-between; align-items: center; background: #bacce5; border-bottom: 1px solid #9fb2cc; padding-right: 5px; }
.tab { align-self: flex-start; display: flex; align-items: center; width: 130px; height: 34px; padding-left: 7px; gap: 9px; background: linear-gradient(#fff, #f0f6fe); border-right: 1px solid #9fb2cc; font-size: 13px; }
.tab button { margin-left: auto; margin-right: 8px; color: #556; font: 9px/12px "DejaVu Sans", sans-serif; }
.toolbar { flex: none; height: 86px; display: grid; grid-template-columns: 81px 84px 83px 80px 63px 63px 63px 63px 56px 75px 75px 75px 39px 63px 63px 63px 87px 94px 82px; background: linear-gradient(#f2f8ff, #d5e1f0); border-bottom: 1px solid #66788f; }
.tool { display: flex; flex-direction: column; align-items: center; justify-content: flex-start; padding-top: 1px; white-space: nowrap; }
.tool > svg { width: 16px; height: 16px; margin-bottom: 3px; }
.tool.small > svg { padding: 1px; }
.tool .caret { margin-top: 21px; }
.tool:disabled { color: #8c8c8c; }
.tool.sw { padding-top: 7px; }
.sw label { display: flex; flex-direction: column; align-items: center; }
.sw input { position: absolute; opacity: 0; width: 66px; height: 22px; }
.switch { width: 66px; height: 22px; margin-bottom: 5px; display: grid; grid-template-columns: 27px 1fr; border: 1px solid #9fb0c6; border-radius: 2px; background: #dce6f2; }
.switch::before { content: ""; background: linear-gradient(#d5dee9, #b8c5d5); border-right: 1px solid #8fa0b8; }
.switch b { font-size: 10px; font-family: var(--mono); line-height: 20px; text-align: center; color: #55606e; }

.grid { color: #000; }
.grid th { height: 32px; font-family: var(--ui); line-height: 16px; background: linear-gradient(#f3f8fe, #dde8f6); border: solid var(--line); border-width: 0 1px 1px 0; text-align: center; }
.grid th.fill { background: #cedaec; border-right: 0; }
.grid th.corner { background: linear-gradient(135deg, transparent 50%, #2f74d8 50%) right 2px bottom 2px / 10px 11px no-repeat, #eaf2fc; }
.grid td { height: 22px; padding-left: 2px; }
.mark i { display: block; width: 0; border: 4px solid transparent; border-left-color: #000; border-right: 0; margin-left: 2px; }

.main-info { flex: none; height: 129px; padding: 0 3px 2px 2px; border: solid #66788f; border-width: 0 1px 1px; background: #eaf3fd; display: flex; flex-direction: column; margin-right: 1px; }
.legend { flex: none; height: 20px; display: flex; justify-content: center; background: linear-gradient(#66788f, #66788f) 0 8px / 100% 1px no-repeat; }
.legend h3 { height: 21px; padding: 0 8px; line-height: 14px; background: #eff6fe; border: 1px solid #66788f; border-top: 0; border-radius: 0 0 3px 3px; color: #1d3d77; position: relative; }
.main-info .legend { margin: 0 -3px 0 -2px; }
.info-grids { flex: 1; display: flex; gap: 2px; background: #8aa0bf; border: 1px solid #8aa0bf; }
.info-left { flex: 1; min-width: 0; background: #fff; }
.info-right { flex: 0 0 197px; background: #fff; }
.info tbody td { background: #aed2f8; border-right: 1px solid #c3ddf8; border-bottom: 1px solid #e4f0fd; height: 23px; }
.info tbody td.mark { background: #c8ccd2; }
.info-right th { height: 21px; }
.hsplit { flex: none; height: 6px; display: flex; justify-content: center; align-items: flex-end; gap: 8px; background: linear-gradient(#dde6f0, #8d99a8); padding-right: 4px; }
.tri-up { border: 4px solid transparent; border-bottom: 4px solid var(--ink); border-top: 0; }
.dots { width: 35px; height: 2px; margin-bottom: 3px; background: repeating-linear-gradient(90deg, #1e3f77 0 2px, #fff 2px 4px); }

.lower { flex: 1; min-height: 0; display: flex; border-top: 1px solid #66788f; }
.process { flex: none; width: 644px; display: flex; flex-direction: column; background: #eaf3fd; border: solid #66788f; border-width: 0 1px; }
.process .legend h3 { padding: 0 5px; border-top: 1px solid #66788f; border-radius: 3px; height: 20px; }
.process-body { flex: 1; min-height: 0; display: flex; }
.side { flex: none; width: 23px; background: linear-gradient(90deg, #c5dafb, #edf4ff); padding: 4px 0 0 4px; }
.side button { position: relative; display: block; width: 20px; height: 90px; }
.side svg { position: absolute; inset: 0; }
.side b { position: absolute; left: 2px; top: 10px; writing-mode: vertical-rl; text-orientation: sideways; color: #000; }
.device { flex: none; width: 197px; padding: 7px 1px 0 6px; border: 1px solid #3c5f9a; border-bottom: 0; background: linear-gradient(100deg, #8db2e9, #c9dcf9); color: #000; }
.device-head { height: 33px; display: flex; align-items: center; justify-content: space-between; padding: 0 7px 0 15px; background: #f4f4f4; color: #1e3553; }
.device-tree { height: 278px; padding-left: 9px; background: #fff; border: 1px solid var(--line); border-left: 0; }
.device-tree li { height: 19px; display: flex; align-items: center; }
.box { width: 9px; height: 9px; border: 1px solid #848484; background: linear-gradient(#444, #444) center / 5px 1px no-repeat, #f2f2f2; }
.dash { width: 7px; height: 1px; background: repeating-linear-gradient(90deg, #000 0 1px, transparent 1px 2px); }
.node { display: flex; align-items: center; gap: 6px; padding: 0 3px 0 1px; height: 19px; }
.node.cur { background: #f0f0f0; border: 1px solid #dcdcdc; padding-left: 0; }
.device-tree .child { padding-left: 32px; background: repeating-linear-gradient(#000 0 1px, transparent 1px 2px) 20px 0 / 1px 10px no-repeat, repeating-linear-gradient(90deg, #000 0 1px, transparent 1px 2px) 20px 9px / 10px 1px no-repeat; }
.hint { height: 36px; padding: 7px 0 0 5px; line-height: 13px; white-space: nowrap; }
.sub { height: 129px; background: #fff; border: solid var(--line); border-width: 1px 0 1px 1px; }
.sub td { border: solid #c3d3ea; border-width: 0 1px 1px 0; text-align: center; padding: 0; }
.sub .hot { background: #aed2f8; }
.sub input { width: 13px; height: 13px; vertical-align: middle; }
.vsplit { flex: none; width: 6px; display: flex; flex-direction: column; align-items: center; gap: 7px; padding-top: 334px; background: linear-gradient(90deg, #d6dfea, #7f8da0); }
.vsplit.wide { padding-top: 346px; }
.tri-l { border: 4px solid transparent; border-right-color: var(--ink); border-left: 0; }
.vdots { width: 2px; height: 35px; background: repeating-linear-gradient(#1e3f77 0 2px, #fff 2px 4px); }

.flow { flex: 1; min-width: 0; display: flex; background: #fff; border-right: 1px solid var(--line); margin-right: 2px; color: #000; }
.flow-main { flex: 1; min-width: 0; display: flex; flex-direction: column; }
.flow-head th { height: 18px; line-height: 16px; text-align: left; padding-left: 7px; background: linear-gradient(#f3f8fe, #dce7f6); border: solid #b4c4dc; border-width: 1px 0 1px 1px; }
.flow-head th:first-child { padding-left: 1px; border-left: 0; }
.flow-head .m { line-height: 1; }
.flow-rows { flex: 1; min-height: 0; overflow: hidden; }
.flow-rows table { margin-top: -6px; }
.flow-rows td { height: 19px; line-height: 19px; padding-left: 5px; border-left: 1px solid #dcdcdc; }
.flow-rows td:first-child { border-left: 0; }
.flow-rows svg { display: inline-block; vertical-align: middle; width: 17px; height: 16px; margin-right: 4px; }
.flow-rows .dir td:first-child { padding-left: 37px; background:
  linear-gradient(#444, #444) 22px 9px / 5px 1px no-repeat,
  linear-gradient(#f2f2f2, #f2f2f2) 21px 6px / 7px 7px no-repeat,
  linear-gradient(#848484, #848484) 20px 5px / 9px 9px no-repeat,
  repeating-linear-gradient(90deg, #000 0 1px, transparent 1px 2px) 29px 9px / 6px 1px no-repeat,
  repeating-linear-gradient(#000 0 1px, transparent 1px 2px) 24px 0 / 1px 19px no-repeat; }
.flow-rows .doc td:first-child { padding-left: 53px; background:
  repeating-linear-gradient(90deg, #000 0 1px, transparent 1px 2px) 40px 9px / 10px 1px no-repeat,
  repeating-linear-gradient(#000 0 1px, transparent 1px 2px) 40px 0 / 1px 19px no-repeat,
  repeating-linear-gradient(#000 0 1px, transparent 1px 2px) 24px 0 / 1px 19px no-repeat; }
.flow-rows .doc.end td:first-child { background-size: 10px 1px, 1px 10px, 1px 19px; }
.flow-rows .doc.tail td:first-child { background-size: 10px 1px, 1px 19px, 0 0; }
.flow-rows .doc.tail.end td:first-child { background-size: 10px 1px, 1px 10px, 0 0; }
.flow-rows .final td:first-child { background-size: 5px 1px, 7px 7px, 9px 9px, 6px 1px, 1px 5px; }
.flow-rows .cur td { background-color: #ededed; border-color: #ededed; }
.flow-rows .cur td:first-child { background:
  repeating-linear-gradient(90deg, #000 0 1px, transparent 1px 2px) 40px 9px / 10px 1px no-repeat,
  repeating-linear-gradient(#000 0 1px, transparent 1px 2px) 40px 0 / 1px 19px no-repeat,
  repeating-linear-gradient(#000 0 1px, transparent 1px 2px) 24px 0 / 1px 19px no-repeat,
  linear-gradient(#ededed, #ededed) 52px 0 no-repeat; }
.flow-rows .rest td { height: 80px; }
.scroll { flex: none; width: 17px; display: flex; flex-direction: column; align-items: center; background: #f1f2f4; padding: 6px 1px 0; gap: 5px; }
.arrow-up { border: 5px solid transparent; border-bottom-color: #555; border-top: 0; }
.arrow-down { border: 5px solid transparent; border-top-color: #555; border-bottom: 0; }
.thumb { width: 15px; height: 39%; margin-top: auto; background: linear-gradient(90deg, #f2f5f9, #dbe2ec); border: 1px solid #8a97a8; display: grid; place-items: center; }
.thumb b { width: 9px; height: 7px; background: repeating-linear-gradient(#778 0 1px, transparent 1px 2px); }

.detail { flex: 1; min-width: 0; display: flex; flex-direction: column; color: #000; margin-right: 1px; }
.detail-tabs { flex: none; height: 25px; display: flex; align-items: center; gap: 21px; background: linear-gradient(#bfd0e8, #dce8f6); padding-right: 5px; border-bottom: 1px solid #a5b5cb; }
.detail-tabs a { line-height: 22px; height: 24px; }
.detail-tabs .cur { position: relative; width: 69px; margin-right: -13px; text-align: center; font-weight: bold; font-size: 13px; color: #fff; background: linear-gradient(#3a78cc, #1b55ae); }
.detail-tabs .cur::after { content: ""; position: absolute; left: 29px; bottom: 0; border: 5px solid transparent; border-bottom-color: #fff; border-top: 0; }
.detail-tabs .caret { margin-left: auto; }
.detail-body { flex: 1; min-height: 0; display: flex; }
.params { flex: none; width: 378px; display: flex; flex-direction: column; background: #fff; border-right: 2px solid #3c66a8; border-left: 1px solid #3c66a8; }
.subtabs { flex: none; height: 28px; padding: 3px 0 0 5px; background: linear-gradient(#c7dbfb, #f6faff 22px, #3c5f9a 22px 23px, #8fb3ea 23px); }
.slant { position: relative; width: 96px; height: 20px; }
.slant svg { position: absolute; inset: 0; }
.slant b { position: absolute; right: 12px; top: 1px; font-size: 13px; }
.params-grid { flex: 1; overflow: hidden; }
.params-grid td { border: solid #c3d3ea; border-width: 0 1px 1px 0; background: #fff; }
.params-grid td:first-child { background: linear-gradient(90deg, #dde9f7, #c3d3e8); border-color: #8aa4c8; }
.params-grid tr:nth-child(odd) td:nth-child(2), .params-grid tr:nth-child(odd) td:nth-child(4) { background: #e8f1fc; }
.params-grid tr:nth-child(even) td:nth-child(n+2):nth-child(-n+5) { background: #f3f3f3; }
.params-grid .key { color: #b0238a; }
.params-grid tr td.picked { background: #aed2f8; outline: 1px dotted #000; outline-offset: -1px; }
.notes { flex: 1; min-width: 0; display: flex; flex-direction: column; }
.notes-body { flex: 1; min-height: 0; display: flex; }
.note { display: flex; flex-direction: column; min-width: 0; border-right: 2px solid #7d9cc4; }
.n1 { flex: 0 0 198px; }
.n2 { flex: 1; }
.note label { flex: none; height: 24px; line-height: 23px; padding-left: 2px; background: linear-gradient(#f1f7fe, #d6e2f1); color: #1d3d77; border-bottom: 2px solid #66788f; }
.note-row { flex: 1; min-height: 0; display: flex; background: #f0f0f0; }
.note textarea { flex: 1; min-width: 0; resize: none; outline: 0; overflow: hidden; padding: 2px 0 0 2px; line-height: 12px; }
.bar { flex: none; width: 10px; padding-top: 8px; border-left: 1px solid #fff; }
.n2 .bar { width: 17px; padding-left: 4px; }

/* ---- Annotation arrow drawn over the windows ---- */
.pointer { position: absolute; left: 1280px; top: 724px; pointer-events: none; }
```
